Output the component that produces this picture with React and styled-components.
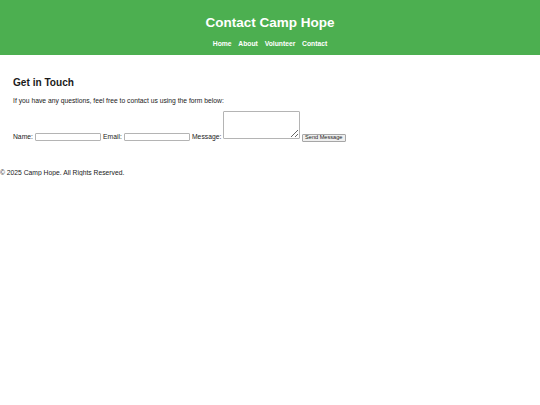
import React from 'react'
import styled, { createGlobalStyle } from 'styled-components'

const GlobalStyle = createGlobalStyle`
  html, body {
    margin: 0;
    padding: 0;
    background: #fff;
  }
  body {
    font-family: "Liberation Sans", Arial, sans-serif;
    color: #1a1a1a;
  }
`

export default function App() {
  return (
    <>
      <GlobalStyle />
      <Header>
        <Title>Contact Camp Hope</Title>
        <Nav>
          <NavLink href="#">Home</NavLink>
          <NavLink href="#">About</NavLink>
          <NavLink href="#">Volunteer</NavLink>
          <NavLink href="#">Contact</NavLink>
        </Nav>
      </Header>
      <Main>
        <Heading>Get in Touch</Heading>
        <Text>If you have any questions, feel free to contact us using the form below:</Text>
        <Form onSubmit={e => e.preventDefault()}>
          <Label htmlFor="name">Name:</Label>{' '}
          <Input id="name" type="text" />{' '}
          <Label htmlFor="email">Email:</Label>{' '}
          <Input id="email" type="email" />{' '}
          <Label htmlFor="message">Message:</Label>{' '}
          <TextArea id="message" />{' '}
          <Button type="submit">Send Message</Button>
        </Form>
      </Main>
      <Footer>© 2025 Camp Hope. All Rights Reserved.</Footer>
    </>
  )
}

const Header = styled.header`
  background-color: #4caf50;
  color: #fff;
  text-align: center;
  padding: 15px 0 7.6px;
`

const Title = styled.h1`
  font-size: 13.5px;
  font-weight: bold;
  line-height: normal;
  margin: 0 0 10px;
`

const Nav = styled.nav`
  display: flex;
  justify-content: center;
  gap: 6.8px;
`

const NavLink = styled.a`
  color: #fff;
  font-size: 6.75px;
  font-weight: bold;
  text-decoration: none;
  line-height: normal;
`

const Main = styled.main`
  padding: 22.4px 13px 0;
`

const Heading = styled.h2`
  font-size: 10.1px;
  font-weight: bold;
  line-height: normal;
  margin: 0 0 9px;
`

const Text = styled.p`
  font-size: 6.75px;
  line-height: normal;
  margin: 0 0 6.8px;
`

const Form = styled.form`
  font-size: 6.75px;
  line-height: normal;
  margin: 0 0 27px;
`

const Label = styled.label`
  font-size: 6.75px;
`

const Input = styled.input`
  box-sizing: border-box;
  width: 66.4px;
  height: 8.4px;
  padding: 0 1px;
  font-family: "Liberation Sans", Arial, sans-serif;
  font-size: 5.6px;
  border: 1px solid #b4b4b4;
  border-radius: 1px;
  background: #fff;
  vertical-align: baseline;
  margin: 0;
`

const TextArea = styled.textarea`
  box-sizing: border-box;
  width: 76.7px;
  height: 28.3px;
  padding: 1px;
  font-family: "Liberation Sans", Arial, sans-serif;
  font-size: 5.6px;
  border: 1px solid #b4b4b4;
  border-radius: 1px;
  margin: 0;
  vertical-align: baseline;
`

const Button = styled.button`
  box-sizing: border-box;
  width: 44px;
  height: 8.4px;
  padding: 0;
  font-family: "Liberation Sans", Arial, sans-serif;
  font-size: 5.6px;
  color: #222;
  background: #efefef;
  border: 1px solid #a6a6a6;
  border-radius: 1px;
  margin: 0;
  line-height: 1;
`

const Footer = styled.footer`
  font-size: 6.75px;
  line-height: normal;
`
